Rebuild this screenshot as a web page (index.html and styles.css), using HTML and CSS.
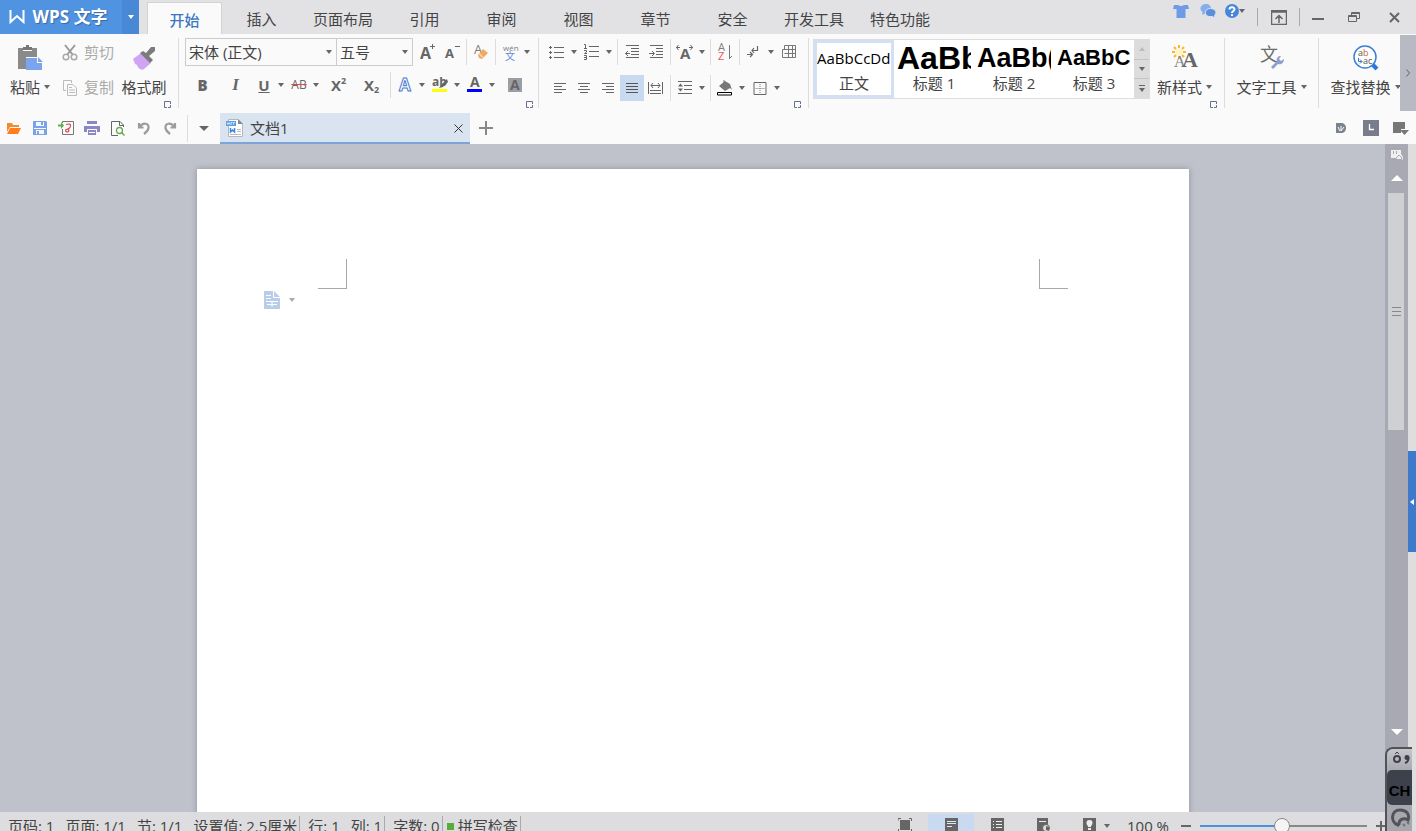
FILE: index.html
```
<!DOCTYPE html>
<html lang="zh-CN">
<head>
    <meta charset="UTF-8">
    <meta name="viewport" content="width=device-width, initial-scale=1.0">
    <title>WPS 文字 - 文档1</title>
    <link rel="stylesheet" href="styles.css">
</head>
<body>
    <svg class="sprite" width="0" height="0">
        <symbol id="launcher" viewBox="0 0 7 7">
            <path d="M3 .5H.5V6.5H3M3 .5H6.5V3M4 6.5H6.5V4" fill="none" stroke="#66718f"/>
        </symbol>
    </svg>

    <header class="titlebar">
        <button class="app-button">
            <svg width="16" height="14" viewBox="0 0 16 14"><path d="M1.500 0V12L8 6L14.500 12V0" fill="none" stroke="#fff" stroke-width="2"/></svg>
            <span>WPS 文字</span>
        </button>
        <button class="app-menu" aria-label="菜单"><i class="caret white"></i></button>
        <nav class="tabs">
            <a href="#" class="tab active">开始</a>
            <a href="#" class="tab">插入</a>
            <a href="#" class="tab">页面布局</a>
            <a href="#" class="tab">引用</a>
            <a href="#" class="tab">审阅</a>
            <a href="#" class="tab">视图</a>
            <a href="#" class="tab">章节</a>
            <a href="#" class="tab">安全</a>
            <a href="#" class="tab">开发工具</a>
            <a href="#" class="tab">特色功能</a>
        </nav>
        <div class="account">
            <button aria-label="皮肤"><svg width="16" height="14" viewBox="0 0 16 14"><path d="M1 1H5Q8 3 11 1H15L16 5H12.500V14H3.500V5H0Z" fill="#6f9be6"/></svg></button>
            <button aria-label="论坛"><svg width="16" height="14" viewBox="0 0 16 14"><path d="M6 0C9 0 11 2 11 4.500S9 9 6 9L2 11L2.500 8C-1 6 0 0 6 0Z" fill="#85aeea"/><path d="M10.500 4.500C14 4.500 16 6.500 16 8.500C16 10 15 11 14.500 11.500L15 14L12 12.500C7 13 5.500 11 5.500 8.500S7.500 4.500 10.500 4.500Z" fill="#5b8edb" stroke="#dfe6f2"/></svg></button>
            <button class="help" aria-label="帮助"><svg width="14" height="14" viewBox="0 0 14 14"><circle cx="7" cy="7" r="7" fill="#4686d8"/><path d="M4.500 5.500C4.500 2.500 9.500 2.500 9.500 5.300C9.500 7 7 7 7 9M7 10.200V12" fill="none" stroke="#fff" stroke-width="2"/></svg><i class="caret"></i></button>
        </div>
        <div class="window-buttons">
            <button class="collapse" aria-label="隐藏功能区"><svg width="16" height="15" viewBox="0 0 16 15"><path d="M.5 .5H15.500V14.500H.5ZM0 2H16M8 13V6M4.500 9L8 5.500L11.500 9" fill="none" stroke="#666" stroke-width="1.500"/></svg></button>
            <button aria-label="最小化"><svg width="12" height="12" viewBox="0 0 12 12"><path d="M0 8H12" stroke="#666" stroke-width="2"/></svg></button>
            <button aria-label="还原"><svg width="12" height="10" viewBox="0 0 12 10"><path d="M.5 3.500H8.500V9.500H.5ZM0 4.500H9M3.500 3V.5H11.500V6.500H9M3 1.500H12" fill="none" stroke="#666"/></svg></button>
            <button aria-label="关闭"><svg width="11" height="11" viewBox="0 0 11 11"><path d="M1 1L10 10M10 1L1 10" stroke="#666" stroke-width="2"/></svg></button>
        </div>
    </header>

    <section class="ribbon">
        <div class="group clipboard">
            <div class="group-body">
                <button class="big">
                    <svg width="26" height="26" viewBox="0 0 26 26"><path d="M1 3H6V6H15V3H20V12H9V24H1Z" fill="#8a8a8a"/><path d="M6 2H9V0H12V2H15V5H6Z" fill="#777"/><path d="M9 13H20V18H25V25H9Z" fill="#7ca3ee"/><path d="M21 12L26 17H21Z" fill="#7ca3ee"/></svg>
                    <span>粘贴<i class="caret"></i></span>
                </button>
                <div class="small-buttons">
                    <button class="small" disabled><svg width="16" height="17" viewBox="0 0 16 17"><path d="M3 1L11 11M13 1L5 11" stroke="#999" stroke-width="2"/><circle cx="4" cy="13" r="2.800" fill="none" stroke="#aaa" stroke-width="1.500"/><circle cx="12" cy="13" r="2.800" fill="none" stroke="#aaa" stroke-width="1.500"/></svg>剪切</button>
                    <button class="small" disabled><svg width="16" height="17" viewBox="0 0 16 17"><path d="M4 11.500H1.500V1.500H9.500V4M5.500 5.500H11L14.500 9V16.500H5.500ZM7 8.500H10M7 11H13M7 13.500H13" fill="none" stroke="#bbb"/></svg>复制</button>
                </div>
                <button class="big painter">
                    <svg width="24" height="24" viewBox="0 0 24 24"><path d="M9 7L19 17L12 23C9 25 6 22 5 19L3 18L1 13Z" fill="#cfa5f3"/><path d="M11 5L14 7L19 1H23V5L17 10L21 14L18 17L8 7Z" fill="#7b7b7b"/></svg>
                    <span>格式刷</span>
                </button>
            </div>
            <button class="launcher" aria-label="剪贴板"><svg width="7" height="7"><use href="#launcher"/></svg></button>
        </div>

        <div class="group font">
            <div class="group-body">
                <div class="row">
                    <label class="combo font-name"><select aria-label="字体"><option>宋体 (正文)</option><option>黑体</option></select><i class="caret"></i></label>
                    <label class="combo font-size"><select aria-label="字号"><option>五号</option><option>四号</option></select><i class="caret"></i></label>
                    <button class="tool first" aria-label="增大字号"><svg width="16" height="18" viewBox="0 0 16 18"><text x="0" y="16" class="glyph" font-size="16">A</text><path d="M12.500 1V6M10 3.500H15" stroke="#666"/></svg></button>
                    <button class="tool" aria-label="减小字号"><svg width="16" height="18" viewBox="0 0 16 18"><text x="1" y="15" class="glyph" font-size="13">A</text><path d="M11 3.500H16" stroke="#666"/></svg></button>
                    <span class="sep"></span>
                    <button class="tool" aria-label="清除格式"><svg width="16" height="18" viewBox="0 0 16 18"><text x="1" y="11" class="glyph thin" font-size="13">A</text><path d="M5 12L10 6L15 10L9 16L6 15Z" fill="#f0aa62"/><path d="M6.500 11L10 14.500" stroke="#fff"/></svg></button>
                    <span class="sep"></span>
                    <button class="tool drop" aria-label="拼音指南"><svg width="16" height="18" viewBox="0 0 16 18"><text x="1" y="8" class="glyph thin" font-size="8">wén</text><text x="3" y="17" class="glyph blue" font-size="10">文</text></svg><i class="caret"></i></button>
                </div>
                <div class="row formats">
                    <button class="tool wide letter"><b>B</b></button>
                    <button class="tool wide letter italic"><em>I</em></button>
                    <button class="tool drop letter"><u>U</u><i class="caret"></i></button>
                    <button class="tool drop letter strike"><s>AB</s><i class="caret"></i></button>
                    <button class="tool wide letter">X<sup>2</sup></button>
                    <button class="tool wide letter">X<sub>2</sub></button>
                    <span class="sep"></span>
                    <button class="tool drop" aria-label="文字效果"><svg width="16" height="16" viewBox="0 0 16 16"><text x="2" y="14" class="glyph outline" font-size="17">A</text></svg><i class="caret"></i></button>
                    <button class="tool drop" aria-label="突出显示"><svg width="16" height="16" viewBox="0 0 16 16"><text x="0" y="9" class="glyph" font-size="12">ab</text><path d="M15 2L9 8L7 11L11 10L16 5Z" fill="#666"/><path d="M0 12H15V15H0Z" fill="#ff0"/></svg><i class="caret"></i></button>
                    <button class="tool drop" aria-label="字体颜色"><svg width="16" height="16" viewBox="0 0 16 16"><text x="3" y="10" class="glyph" font-size="14">A</text><path d="M0 12H15V15H0Z" fill="#00f"/></svg><i class="caret"></i></button>
                    <button class="tool wide" aria-label="字符底纹"><svg width="14" height="14" viewBox="0 0 14 14"><path d="M0 0H14V14H0Z" fill="#9b9ea5"/><text x="2" y="12" class="glyph" font-size="14">A</text></svg></button>
                </div>
            </div>
            <button class="launcher" aria-label="字体设置"><svg width="7" height="7"><use href="#launcher"/></svg></button>
        </div>

        <div class="group paragraph">
            <div class="group-body">
                <div class="row">
                    <button class="tool drop" aria-label="项目符号"><svg width="16" height="16" viewBox="0 0 16 16"><path d="M5 3.500H15M5 8.500H15M5 13.500H15M0 3.500H3M0 8.500H3M0 13.500H3M1.500 2V5M1.500 7V10M1.500 12V15" stroke="#666"/></svg><i class="caret"></i></button>
                    <button class="tool drop" aria-label="编号"><svg width="16" height="16" viewBox="0 0 16 16"><path d="M5 2.500H15M5 7.500H15M5 12.500H15M0 .5H1.500V4M0 4.500H3M0 6.500H2.500V8L.5 9.500H3M0 11.500H2.500V15.500H0M0 13.500H2" fill="none" stroke="#666"/></svg><i class="caret"></i></button>
                    <span class="sep"></span>
                    <button class="tool" aria-label="减少缩进量"><svg width="14" height="14" viewBox="0 0 14 14"><path d="M1 .5H14M6 3.500H14M6 6.500H14M6 9.500H14M1 12.500H14M0 8.500H5M3 6L.5 8.500L3 11" fill="none" stroke="#666"/></svg></button>
                    <button class="tool" aria-label="增加缩进量"><svg width="14" height="14" viewBox="0 0 14 14"><path d="M1 .5H14M7 3.500H14M7 6.500H14M7 9.500H14M1 12.500H14M0 8.500H5M3 6L5.500 8.500L3 11" fill="none" stroke="#666"/></svg></button>
                    <span class="sep"></span>
                    <button class="tool drop" aria-label="字符缩放"><svg width="18" height="18" viewBox="0 0 18 18"><text x="4" y="16" class="glyph" font-size="15">A</text><path d="M0 4.500H4M2.500 2L.5 4.500L2.500 7M13 4.500H17M14.500 2L16.500 4.500L14.500 7" fill="none" stroke="#666"/></svg><i class="caret"></i></button>
                    <span class="sep"></span>
                    <button class="tool" aria-label="排序"><svg width="16" height="18" viewBox="0 0 16 18"><text x="1" y="8" class="glyph thin" font-size="11">A</text><text x="1" y="17" class="glyph red" font-size="11">Z</text><path d="M12.500 2V16M12.500 15.500L15 13" fill="none" stroke="#777"/></svg></button>
                    <span class="sep"></span>
                    <button class="tool drop" aria-label="显示标记"><svg width="14" height="14" viewBox="0 0 14 14"><path d="M10.500 1V5.500H5M7 3L5 5.500L7 8M0 9.500H5M3 7L5.500 9.500L3 12" fill="none" stroke="#666" stroke-width="1.200"/></svg><i class="caret"></i></button>
                    <button class="tool" aria-label="插入表格"><svg width="14" height="14" viewBox="0 0 14 14"><path d="M2.500 .5H13.500V12.500H.5V4.500H13.500M2.500 8.500H13.500M2.500 .5V5M6.500 .5V12.500M10.500 .5V12.500" fill="none" stroke="#777"/></svg></button>
                </div>
                <div class="row aligns">
                    <button class="tool" aria-label="左对齐"><svg width="12" height="12" viewBox="0 0 12 12"><path d="M0 1.500H12M0 4.500H8M0 7.500H12M0 10.500H8" stroke="#666"/></svg></button>
                    <button class="tool" aria-label="居中"><svg width="12" height="12" viewBox="0 0 12 12"><path d="M0 1.500H12M2 4.500H10M0 7.500H12M2 10.500H10" stroke="#666"/></svg></button>
                    <button class="tool" aria-label="右对齐"><svg width="12" height="12" viewBox="0 0 12 12"><path d="M0 1.500H12M4 4.500H12M0 7.500H12M4 10.500H12" stroke="#666"/></svg></button>
                    <button class="tool on" aria-label="两端对齐"><svg width="12" height="12" viewBox="0 0 12 12"><path d="M0 1.500H12M0 4.500H12M0 7.500H12M0 10.500H12" stroke="#555"/></svg></button>
                    <button class="tool" aria-label="分散对齐"><svg width="16" height="12" viewBox="0 0 16 12"><path d="M.5 0V12M14.500 0V12M3 3.500H12M5 1L3 3.500L5 6M10 1L12 3.500L10 6M2 8.500H13M2 11.500H13" fill="none" stroke="#666"/></svg></button>
                    <span class="sep"></span>
                    <button class="tool drop" aria-label="行距"><svg width="14" height="14" viewBox="0 0 14 14"><path d="M0 .5H14M6 4.500H14M6 8.500H14M0 12.500H14" stroke="#666"/><path d="M0 5.500H5L2.500 2.500ZM0 7.500H5L2.500 10.500Z" fill="#666"/></svg><i class="caret"></i></button>
                    <span class="sep"></span>
                    <button class="tool drop" aria-label="底纹颜色"><svg width="16" height="16" viewBox="0 0 16 16"><path d="M2 6L8 1L13 4L15 10L13 8L8 11Z" fill="#777"/><path d="M7 0V4" stroke="#777"/><path d="M.5 12.500H14.500V15H.5Z" fill="#fff" stroke="#000"/></svg><i class="caret"></i></button>
                    <button class="tool drop" aria-label="边框"><svg width="13" height="13" viewBox="0 0 13 13"><path d="M.5 .5H12.500V12.500H.5Z" fill="none" stroke="#666"/><path d="M2 6.500H11M6.500 2V11" stroke="#777" stroke-dasharray="1 1"/></svg><i class="caret"></i></button>
                </div>
            </div>
            <button class="launcher" aria-label="段落设置"><svg width="7" height="7"><use href="#launcher"/></svg></button>
        </div>

        <div class="group styles">
            <div class="group-body">
                <div class="gallery">
                    <button class="style selected"><span class="preview">AaBbCcDd</span><span>正文</span></button>
                    <button class="style"><span class="preview h1">AaBb</span><span>标题 1</span></button>
                    <button class="style"><span class="preview h2">AaBb(</span><span>标题 2</span></button>
                    <button class="style"><span class="preview h3">AaBbC</span><span>标题 3</span></button>
                    <div class="gallery-scroll">
                        <button aria-label="上一行" disabled><i class="caret up"></i></button>
                        <button aria-label="下一行"><i class="caret"></i></button>
                        <button class="more" aria-label="更多样式"><i class="caret"></i></button>
                    </div>
                </div>
                <button class="big">
                    <svg width="26" height="26" viewBox="0 0 26 26"><circle cx="7" cy="7" r="3.500" fill="#fff3c4"/><path d="M7 0V3M7 11V14M0 7H3M11 7H14M2 2L4 4M10 10L12 12M12 2L10 4M4 10L2 12" stroke="#fbb829" stroke-width="2"/><text x="2" y="22" class="glyph serif thin" font-size="16">A</text><text x="10" y="22" class="glyph serif" font-size="22">A</text></svg>
                    <span>新样式<i class="caret"></i></span>
                </button>
            </div>
            <button class="launcher" aria-label="样式"><svg width="7" height="7"><use href="#launcher"/></svg></button>
        </div>

        <div class="group text-tools">
            <button class="big">
                <svg width="24" height="26" viewBox="0 0 24 26"><text x="0" y="16" class="glyph han" font-size="18">文</text><path d="M11 22L17 16C16 13 18 11 21 11L19 14L21 16L24 14C24 18 21 20 18 19L13 24Z" fill="#8e9fce"/></svg>
                <span>文字工具<i class="caret"></i></span>
            </button>
        </div>

        <div class="group find">
            <button class="big">
                <svg width="26" height="26" viewBox="0 0 26 26"><circle cx="12" cy="12" r="11" fill="#fff" stroke="#3c80d2" stroke-width="1.500"/><path d="M20 20L24 24" stroke="#2d78d6" stroke-width="4"/><text x="5" y="11" class="glyph plain" font-size="9">a<tspan fill="#c5662a">b</tspan></text><path d="M5.500 13V16.500H9M7 14.500L9 16.500L7 18.500" fill="none" stroke="#2d78d6"/><text x="10" y="19" class="glyph plain" font-size="9">ac</text></svg>
                <span>查找替换<i class="caret"></i></span>
            </button>
        </div>
        <button class="ribbon-next" aria-label="更多"><svg width="5" height="8" viewBox="0 0 5 8"><path d="M.5 .5L3.500 4L.5 7.500" fill="none" stroke="#666"/></svg></button>
    </section>

    <div class="quickbar">
        <div class="quick-tools">
            <button aria-label="打开"><svg width="16" height="14" viewBox="0 0 16 14"><path d="M1 2H6L7 4H13V6H4L1 11Z" fill="#f58a2a"/><path d="M4 7H15L12 13H1Z" fill="#ff7f1f"/></svg></button>
            <button aria-label="保存"><svg width="14" height="14" viewBox="0 0 14 14"><path d="M0 0H13L14 1V14H0Z" fill="#7aa2ea"/><path d="M3 1H11V5H3ZM1 7H13V8H1ZM3 9H11V13H3Z" fill="#f4f8ff"/><path d="M8 1H10V4H8ZM4 10H6V13H4Z" fill="#7aa2ea"/></svg></button>
            <button aria-label="输出为PDF"><svg width="16" height="14" viewBox="0 0 16 14"><path d="M4.500 2V.5H15.500V13.500H4.500V8" fill="none" stroke="#777"/><path d="M8 3.500Q13 2 12.500 5T8 8.500Q7 11 9.500 11T10 7" fill="none" stroke="#d3484c" stroke-width="1.200"/><path d="M0 3.500H3V1L6 4.500L3 8V5.500H0Z" fill="#5fad46"/></svg></button>
            <button aria-label="打印"><svg width="16" height="14" viewBox="0 0 16 14"><path d="M3 0H13V3H3ZM0 5H16V11H13V8H3V11H0ZM4 9H12V14H4Z" fill="#8b86c8"/><path d="M5 11.500H11" stroke="#fff"/></svg></button>
            <button aria-label="打印预览"><svg width="14" height="15" viewBox="0 0 14 15"><path d="M7 14.500H.5V.5H9L12.500 4V6M8.500 1V4.500H12" fill="none" stroke="#666"/><circle cx="8.500" cy="9.500" r="3" fill="#fff" stroke="#69a84d" stroke-width="1.300"/><path d="M10.500 11.500L13.500 14.500" stroke="#69a84d" stroke-width="1.500"/></svg></button>
            <button aria-label="撤销"><svg width="14" height="14" viewBox="0 0 14 14"><path d="M2 2V6.500H6.500M2.500 6C6 1 12 2 11.500 7Q11 10 7 13" fill="none" stroke="#9c9c9c" stroke-width="2.200"/></svg></button>
            <button aria-label="恢复"><svg width="14" height="14" viewBox="0 0 14 14"><path d="M12 2V6.500H7.500M11.500 6C8 1 2 2 2.500 7Q3 10 7 13" fill="none" stroke="#9c9c9c" stroke-width="2.200"/></svg></button>
        </div>
        <button class="quick-more" aria-label="自定义"><i class="caret large"></i></button>
        <div class="doc-tab">
            <svg width="18" height="20" viewBox="0 0 18 20"><path d="M2.500 1.500H12L16.500 6V18.500H2.500Z" fill="#fff" stroke="#b4b8be"/><path d="M12 1V6H17Z" fill="#888"/><path d="M0 3H10V8H0Z" fill="#5d9fe6"/><path d="M1 4.500L2 6.500L3 4.500L4 6.500M5 7V4.500H6.500M9 4.500H7.500V6.500" fill="none" stroke="#cfe4fa"/><path d="M4.500 10V14L6.500 12L8.500 14V10" fill="none" stroke="#3b86e0" stroke-width="1.500"/><path d="M11 11.500H15M11 13.500H15M4 16.500H15" stroke="#bbb"/></svg>
            <span>文档1</span>
            <button class="close" aria-label="关闭文档"><svg width="9" height="9" viewBox="0 0 9 9"><path d="M.5 .5L8.500 8.500M8.500 .5L.5 8.500" stroke="#333"/></svg></button>
        </div>
        <button class="new-tab" aria-label="新建"><svg width="14" height="14" viewBox="0 0 14 14"><path d="M7 0V14M0 7H14" stroke="#888" stroke-width="2"/></svg></button>
        <div class="quick-right">
            <button aria-label="文档助手"><svg width="10" height="10" viewBox="0 0 10 10"><path d="M0 0H5C8 0 10 2 10 5S8 10 5 10H0Z" fill="#7d8290"/><path d="M2 4L4 8M5 3V8M8 4L5 8" fill="none" stroke="#fff"/></svg></button>
            <button aria-label="登录"><svg width="16" height="16" viewBox="0 0 16 16"><path d="M0 0H16V16H0Z" fill="#787d8b"/><path d="M6.500 4V9.500H11" fill="none" stroke="#fff" stroke-width="1.300"/></svg></button>
            <button aria-label="窗口列表"><svg width="16" height="14" viewBox="0 0 16 14"><path d="M0 1H12V8H8V12H0Z" fill="#777"/><path d="M7 9H16L11.500 14Z" fill="#777"/></svg></button>
        </div>
    </div>

    <main class="workspace">
        <div class="canvas">
            <article class="page">
                <i class="margin-mark left"></i>
                <i class="margin-mark right"></i>
                <button class="paste-options" aria-label="粘贴选项"><svg width="16" height="18" viewBox="0 0 16 18"><path d="M0 0H10L16 6V18H0Z" fill="#b9cce9"/><path d="M9.500 0V6.500H16M2 4.500H7M2 7.500H7M2 10.500H14M3 13.500H13M8 10V16" fill="none" stroke="#fff"/></svg><i class="caret"></i></button>
            </article>
        </div>
        <div class="scrollbar">
            <button class="ruler" aria-label="标尺"><svg width="12" height="11" viewBox="0 0 12 11"><path d="M0 0H10V4L12 7V10H5V8H0Z" fill="#f0f0f0"/><path d="M2.500 1V4M5.500 1V4M5 8L8 5L11 8V9.500H5Z" fill="none" stroke="#a9a9b3"/></svg></button>
            <button class="arrow" aria-label="向上滚动"><i class="scroll-arrow up"></i></button>
            <div class="track"><div class="thumb"><i></i><i></i><i></i></div></div>
            <button class="arrow" aria-label="向下滚动"><i class="scroll-arrow"></i></button>
            <div class="browse"></div>
        </div>
        <aside class="side-strip">
            <button aria-label="展开任务窗格"><svg width="4" height="6" viewBox="0 0 4 6"><path d="M4 0V6L0 3Z" fill="#fff"/></svg></button>
        </aside>
    </main>

    <footer class="statusbar">
        <div class="status-items">
            <span>页码: 1</span>
            <span>页面: 1/1</span>
            <span>节: 1/1</span>
            <span class="ruled">设置值: 2.5厘米</span>
            <span>行: 1</span>
            <span class="ruled">列: 1</span>
            <span class="ruled">字数: 0</span>
            <button class="spelling ruled"><i></i>拼写检查</button>
        </div>
        <div class="views">
            <button aria-label="全屏显示"><svg width="14" height="14" viewBox="0 0 14 14"><path d="M2 2H12V12H2Z" fill="#666"/><path d="M0 3V.5H3M11 .5H13.500V3M13.500 11V13.500H11M3 13.500H.5V11" fill="none" stroke="#666"/></svg></button>
            <button class="on" aria-label="页面视图"><svg width="13" height="14" viewBox="0 0 13 14"><path d="M0 0H13V14H0Z" fill="#666"/><path d="M2 3.500H11M2 5.500H11M2 8.500H7" stroke="#dce6f5"/></svg></button>
            <button aria-label="大纲"><svg width="13" height="14" viewBox="0 0 13 14"><path d="M0 0H13V14H0Z" fill="#666"/><path d="M2 3.500H3M5 3.500H11M2 6.500H3M5 6.500H11M2 9.500H3M5 9.500H11" stroke="#eee"/></svg></button>
            <button aria-label="网页版式"><svg width="13" height="14" viewBox="0 0 13 14"><path d="M0 0H11V7L6 14H0Z" fill="#666"/><path d="M2 3.500H9" stroke="#eee"/><circle cx="9" cy="10" r="3.500" fill="#ddd" stroke="#666"/><path d="M9 8V12H12V9Z" fill="#666"/></svg></button>
            <button class="last" aria-label="护眼模式"><svg width="13" height="14" viewBox="0 0 13 14"><path d="M0 0H13V14H0Z" fill="#666"/><path d="M6.500 2C11 2 9.500 7 8 8V9H5V8C3.500 7 2 2 6.500 2ZM5 10H8V12H5Z" fill="#eee"/></svg></button>
        </div>
        <button class="view-more" aria-label="更多视图"><i class="caret"></i></button>
        <button class="zoom-value">100 %</button>
        <button class="zoom-step" aria-label="缩小"><svg width="10" height="10" viewBox="0 0 10 10"><path d="M0 5H10" stroke="#666" stroke-width="2"/></svg></button>
        <input class="zoom" type="range" min="0" max="100" value="49" aria-label="显示比例">
        <button class="zoom-step plus" aria-label="放大"><svg width="10" height="10" viewBox="0 0 10 10"><path d="M0 5H10M5 0V10" stroke="#666" stroke-width="2"/></svg></button>
    </footer>

    <div class="ime">
        <button class="ime-punct" aria-label="标点"><svg width="20" height="14" viewBox="0 0 20 14"><circle cx="7" cy="8" r="3" fill="none" stroke="#3e4148" stroke-width="2"/><path d="M5 3L7 1L9 3" fill="none" stroke="#3e4148"/><circle cx="17" cy="6.500" r="2.500" fill="#3e4148"/><path d="M18.500 7Q18.500 11 15 12" fill="none" stroke="#3e4148" stroke-width="2"/></svg></button>
        <button class="ime-lang">CH</button>
        <button class="ime-tools" aria-label="输入法工具"><svg width="20" height="22" viewBox="0 0 20 22"><path d="M7 17C-1 14 0 2 9 2C16 2 19 7 17 12C12 9 8 12 8 16Z" fill="none" stroke="#50535b" stroke-width="3"/><path d="M12 16L14 18M16 14L18 16" stroke="#70737a" stroke-width="2"/></svg></button>
    </div>
</body>
</html>
```
FILE: styles.css
```
* {
    box-sizing: border-box;
}

body {
    margin: 0;
    height: 100vh;
    display: flex;
    flex-direction: column;
    overflow: hidden;
    position: relative;
    font-family: "Open Sans", "Noto Sans CJK SC", sans-serif;
    font-size: 15px;
    line-height: 20px;
    color: #444;
    background-color: #fafafa;
}

button {
    display: flex;
    align-items: center;
    justify-content: center;
    flex: none;
    padding: 0;
    border: none;
    background: none;
    font: inherit;
    color: inherit;
    white-space: nowrap;
}

svg {
    display: block;
    flex: none;
}

.sprite {
    position: absolute;
}

.caret {
    display: block;
    flex: none;
    border: 3px solid transparent;
    border-top: 4px solid #666;
    border-bottom: none;
}

.caret.white {
    border-top-color: #fff;
}

.caret.large {
    border-width: 5px 5px 0;
}

.caret.up {
    border-top: none;
    border-bottom: 4px solid #bbb;
}

/* Letters inside icons */

.glyph {
    font-weight: bold;
    fill: #666;
}

.glyph.thin {
    font-weight: normal;
    fill: #808080;
}

.glyph.plain {
    font-weight: normal;
    fill: #555;
}

.glyph.han {
    font-weight: normal;
    fill: #6c6c6c;
}

.glyph.blue {
    font-weight: normal;
    fill: #5a86dc;
}

.glyph.red {
    font-weight: normal;
    fill: #e5595b;
}

.glyph.serif {
    font-family: "Liberation Serif", serif;
}

.glyph.outline {
    fill: #fff;
    stroke: #4a78cf;
    stroke-width: 1px;
}

/* Title bar */

.titlebar {
    display: flex;
    flex: none;
    height: 34px;
    background-color: #e2e2e4;
}

.app-button {
    width: 122px;
    gap: 8px;
    padding-right: 6px;
    background-color: #5093e1;
    color: #fff;
    font-size: 17px;
    font-weight: bold;
    text-shadow: 1px 1px 1px #3468a8;
}

.app-menu {
    width: 17px;
    background-color: #4888d4;
}

.tabs {
    display: flex;
    flex: 1;
    padding: 2px 0 0 8px;
}

.tab {
    display: flex;
    align-items: center;
    justify-content: center;
    min-width: 77px;
    padding: 2px 13px 0;
    color: #444;
    text-decoration: none;
}

.tab.active {
    min-width: 75px;
    margin-right: 1px;
    background-color: #fafafa;
    border: 1px solid #d3d3d6;
    border-bottom: none;
    color: #3b76c4;
    font-weight: 500;
}

.account {
    display: flex;
    height: 22px;
    margin-right: 9px;
}

.account button {
    width: 27px;
}

.window-buttons {
    display: flex;
    align-items: center;
}

.window-buttons button {
    width: 36px;
    height: 18px;
}

.window-buttons .collapse {
    width: 43px;
    border-left: 1px solid #aaa;
    border-right: 1px solid #aaa;
}

.window-buttons button:last-child {
    width: 44px;
}

/* Ribbon */

.ribbon {
    display: flex;
    flex: none;
    height: 78px;
    padding-top: 4px;
}

.group {
    display: flex;
    flex: none;
    flex-direction: column;
    height: 70px;
    padding: 0 7px 0 6px;
    border-right: 1px solid #ddd;
}

.group-body {
    height: 63px;
}

.launcher {
    width: 7px;
    height: 7px;
    align-self: flex-end;
}

.clipboard {
    padding-left: 0;
}

.clipboard .group-body,
.styles .group-body {
    display: flex;
}

.font {
    padding-right: 5px;
}

.big {
    flex-direction: column;
    justify-content: flex-start;
    gap: 6px;
    width: 60px;
    height: 63px;
    padding-top: 7px;
}

.big span {
    display: flex;
    align-items: center;
    gap: 4px;
}

.big > svg {
    height: 26px;
}

.painter {
    width: 54px;
}

.small-buttons {
    display: flex;
    flex-direction: column;
    gap: 15px;
    width: 57px;
    padding: 4px 0 0 2px;
}

.small {
    gap: 6px;
    height: 20px;
    justify-content: flex-start;
    color: #aaa;
}

.row {
    display: flex;
    align-items: center;
    height: 28px;
}

.combo {
    display: flex;
    align-items: center;
    height: 28px;
    padding-right: 4px;
    border: 1px solid #ccc;
}

.combo select {
    flex: 1;
    min-width: 0;
    height: 26px;
    padding: 0 0 0 3px;
    border: none;
    outline: none;
    appearance: none;
    background: none;
    font: inherit;
    color: inherit;
}

.font-name {
    width: 152px;
}

.font-size {
    width: 77px;
    margin-left: -1px;
}

.tool {
    width: 24px;
    height: 26px;
}

.tool.first {
    margin-left: 3px;
}

.tool.wide {
    width: 33px;
}

.tool.drop {
    width: 35px;
    justify-content: flex-start;
}

.tool.drop > :first-child {
    width: 24px;
    text-align: center;
}

.tool.drop .caret {
    margin-left: 2px;
}

.tool.on {
    background-color: #c8d9f0;
}

.sep {
    width: 1px;
    height: 26px;
    margin: 0 2px;
    background-color: #ddd;
}

.formats {
    margin-top: 5px;
    padding-left: 1px;
}

.letter {
    font-size: 15px;
    font-weight: bold;
    color: #666;
}

.italic {
    font-family: "Liberation Serif", serif;
    font-size: 17px;
}

.strike {
    font-size: 12px;
    font-weight: normal;
}

.strike s {
    text-decoration-color: #e44;
}

.letter sup,
.letter sub {
    font-size: 9px;
    line-height: 9px;
}

.letter sup {
    align-self: flex-start;
    margin-top: 4px;
}

.letter sub {
    align-self: flex-end;
    margin-bottom: 4px;
}

.aligns {
    height: 26px;
    margin-top: 9px;
    padding-left: 3px;
}

.styles {
    padding-left: 4px;
}

.gallery {
    display: flex;
    height: 60px;
    margin: 1px 2px 0 0;
    border: 1px solid #ddd;
    background-color: #fff;
}

.style {
    flex-direction: column;
    justify-content: flex-start;
    width: 80px;
    border: 3px solid transparent;
}

.style.selected {
    border-color: #d3dff5;
}

.preview {
    display: flex;
    align-items: center;
    width: 74px;
    height: 30px;
    overflow: hidden;
    font-size: 15px;
    color: #000;
}

.preview.h1,
.preview.h2,
.preview.h3 {
    font-family: "Liberation Sans", sans-serif;
    font-weight: bold;
}

.preview.h1 {
    font-size: 32px;
}

.preview.h2 {
    font-size: 27px;
}

.preview.h3 {
    font-size: 22px;
}

.gallery-scroll {
    display: flex;
    flex-direction: column;
    gap: 1px;
    width: 15px;
    background-color: #c4c4c4;
}

.gallery-scroll button {
    flex: 1;
    flex-direction: column;
    gap: 2px;
    background-color: #dcdcdc;
}

.gallery-scroll .more::before {
    content: "";
    width: 6px;
    height: 1px;
    background-color: #666;
}

.styles .big {
    width: 65px;
}

.text-tools {
    padding: 0;
}

.text-tools .big,
.find .big {
    width: 93px;
}

.find {
    flex: 1;
    min-width: 0;
    padding: 0;
    border-right: none;
    overflow: hidden;
}

.ribbon-next {
    width: 16px;
    height: 76px;
    margin-top: -3px;
    background-color: #b7bac3;
}

/* Quick access bar and document tabs */

.quickbar {
    display: flex;
    align-items: center;
    flex: none;
    height: 32px;
}

.quick-tools {
    display: flex;
    padding: 0 4px 0 1px;
    border-right: 1px solid #ddd;
}

.quick-tools button {
    width: 26px;
    height: 27px;
}

.quick-more {
    width: 32px;
    height: 27px;
}

.doc-tab {
    display: flex;
    align-items: center;
    width: 250px;
    height: 31px;
    padding: 2px 6px 0;
    gap: 6px;
    border-bottom: 2px solid #7ba4d9;
    background-color: #dae4f1;
}

.close {
    width: 12px;
    height: 20px;
    margin-left: auto;
}

.new-tab {
    width: 32px;
    height: 27px;
}

.quick-right {
    display: flex;
    margin-left: auto;
}

.quick-right button {
    width: 30px;
    height: 27px;
}

/* Document area */

.workspace {
    display: flex;
    flex: 1;
    min-height: 0;
    background-color: #bfc2cb;
}

.canvas {
    display: flex;
    flex: 1;
    justify-content: center;
    padding-top: 25px;
    overflow: hidden;
}

.page {
    display: flex;
    justify-content: space-between;
    position: relative;
    width: 992px;
    height: 1403px;
    padding: 90px 121px;
    background-color: #fff;
    box-shadow: 0 0 6px #8e919b;
}

.margin-mark {
    width: 29px;
    height: 30px;
    border-bottom: 1px solid #a8a8a8;
}

.margin-mark.left {
    border-right: 1px solid #a8a8a8;
}

.margin-mark.right {
    border-left: 1px solid #a8a8a8;
}

.paste-options {
    position: absolute;
    top: 122px;
    left: 67px;
    gap: 9px;
}

.paste-options .caret {
    border-top-color: #aaa;
}

.scrollbar {
    display: flex;
    flex-direction: column;
    width: 23px;
    background-color: #a9a9b3;
}

.ruler {
    height: 22px;
}

.arrow {
    height: 24px;
}

.scroll-arrow {
    border: 6px solid transparent;
    border-top-color: #fff;
    border-bottom: none;
}

.scroll-arrow.up {
    border-top: none;
    border-bottom: 6px solid #fff;
}

.track {
    flex: 1;
    padding: 3px 4px 0 3px;
}

.thumb {
    display: flex;
    flex-direction: column;
    align-items: center;
    justify-content: center;
    gap: 3px;
    height: 45%;
    background-color: #cfd0d4;
}

.thumb i {
    width: 9px;
    height: 1px;
    background-color: #888;
}

.browse {
    height: 68px;
}

.side-strip {
    display: flex;
    width: 8px;
    padding-top: 307px;
    background-color: #dedede;
}

.side-strip button {
    width: 8px;
    height: 101px;
    background-color: #3d7acb;
}

/* Status bar */

.statusbar {
    display: flex;
    flex: none;
    height: 19px;
    overflow: hidden;
    background-color: #dddddf;
}

.statusbar > * {
    height: 28px;
}

.status-items {
    display: flex;
    align-items: center;
    flex: 1;
    gap: 11px;
    padding-left: 8px;
    white-space: nowrap;
}

.ruled {
    margin-right: -3px;
    padding-right: 2px;
    border-right: 1px solid #aaa;
}

.spelling {
    gap: 4px;
    margin-left: -4px;
}

.spelling i {
    width: 7px;
    height: 7px;
    background-color: #55ae3a;
}

.views {
    display: flex;
    align-items: flex-end;
}

.views button {
    width: 46px;
    height: 26px;
    padding-bottom: 4px;
}

.views .on {
    background-color: #c8d9f0;
}

.views .last {
    width: 36px;
    padding-left: 10px;
}

.view-more {
    width: 10px;
    margin-right: 12px;
}

.zoom-value {
    width: 48px;
}

.zoom-step {
    width: 28px;
}

.zoom {
    width: 167px;
    margin: 0;
    appearance: none;
    background: none;
}

.zoom::-webkit-slider-runnable-track {
    height: 2px;
    background: linear-gradient(to right, #4a90e2 49%, #888 49%);
}

.zoom::-webkit-slider-thumb {
    appearance: none;
    width: 16px;
    height: 16px;
    margin-top: -7px;
    border: 1px solid #888;
    border-radius: 50%;
    background-color: #f5f5f5;
}

.plus {
    margin-right: 21px;
}

/* Floating input method bar */

.ime {
    display: flex;
    flex-direction: column;
    position: absolute;
    right: 4px;
    bottom: 0;
    width: 27px;
    height: 84px;
    overflow: hidden;
    border: 2px solid #50535b;
    border-width: 2px 0 0 2px;
    border-radius: 8px 0 0 0;
    background-color: #a7a8ad;
}

.ime-punct {
    height: 21px;
    padding-bottom: 4px;
    background: linear-gradient(#c5c6ca, #a9aab0);
}

.ime-lang {
    height: 35px;
    border-radius: 5px 0 0 5px;
    padding-top: 7px;
    background-color: #3d414b;
    color: #000;
    font-family: "Liberation Sans", sans-serif;
    font-size: 15px;
    font-weight: bold;
}

.ime-tools {
    height: 28px;
    padding-left: 2px;
}
```
